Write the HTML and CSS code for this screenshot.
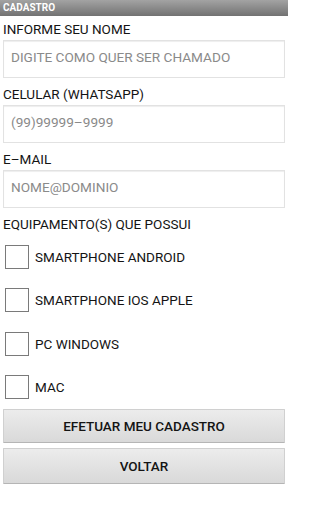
FILE: index.html
```html
<!DOCTYPE html>
<html lang="pt">
<head>
<meta charset="utf-8">
<title>Cadastro</title>
<link rel="stylesheet" href="styles.css">
</head>
<body>
<header class="titlebar">CADASTRO</header>
<main class="form">
  <label class="label first">INFORME SEU NOME</label>
  <div class="field"><span class="placeholder">DIGITE COMO QUER SER CHAMADO</span></div>
  <label class="label">CELULAR (WHATSAPP)</label>
  <div class="field"><span class="placeholder">(99)99999–9999</span></div>
  <label class="label">E–MAIL</label>
  <div class="field"><span class="placeholder">NOME@DOMINIO</span></div>
  <label class="label">EQUIPAMENTO(S) QUE POSSUI</label>
  <ul class="checks">
    <li class="check"><span class="box"></span><span class="check-text">SMARTPHONE ANDROID</span></li>
    <li class="check"><span class="box"></span><span class="check-text">SMARTPHONE IOS APPLE</span></li>
    <li class="check"><span class="box"></span><span class="check-text">PC WINDOWS</span></li>
    <li class="check"><span class="box"></span><span class="check-text">MAC</span></li>
  </ul>
  <button class="btn btn-primary">EFETUAR MEU CADASTRO</button>
  <button class="btn btn-back">VOLTAR</button>
</main>
</body>
</html>
```
FILE: styles.css
```css
html, body {
  margin: 0;
  padding: 0;
  background: #ffffff;
}
body {
  font-family: Roboto, "Liberation Sans", Arial, sans-serif;
  color: #141414;
  width: 288px;
  height: 512px;
  overflow: hidden;
}
.titlebar {
  height: 16px;
  line-height: 16px;
  padding-left: 3px;
  font-size: 10px;
  font-weight: bold;
  color: #ffffff;
  background: linear-gradient(#a3a3a3, #727272);
}
.form {
  display: flex;
  flex-direction: column;
  padding: 0 3px;
}
.label {
  display: block;
  font-size: 13.5px;
  line-height: 20px;
  margin-top: 6px;
  margin-bottom: 1px;
}
.label.first {
  margin-top: 3px;
}
.field {
  box-sizing: border-box;
  height: 38px;
  border: 1px solid #e2e2e2;
  box-shadow: inset 0 1px 1px rgba(0,0,0,0.07);
  display: flex;
  align-items: center;
  padding: 0 0 4px 7px;
}
.placeholder {
  font-size: 13.6px;
  color: #8a8a8a;
}
.checks {
  list-style: none;
  margin: 0;
  padding: 0;
}
.check {
  height: 43.5px;
  display: flex;
  align-items: center;
}
.box {
  box-sizing: border-box;
  width: 24px;
  height: 24px;
  margin-left: 2px;
  border: 1.5px solid #7a7a7a;
  background: #fff;
}
.check-text {
  margin-left: 6px;
  font-size: 13.5px;
}
.btn {
  box-sizing: border-box;
  width: 100%;
  margin: 0;
  padding: 0;
  font-family: Roboto, "Liberation Sans", Arial, sans-serif;
  font-size: 13.5px;
  font-weight: 500;
  color: #141414;
  background: linear-gradient(#ececec, #d9d9d9);
  border: 1px solid #d0d0d0;
  border-bottom: 1px solid #b5b5b5;
  border-radius: 1px;
}
.btn-primary {
  height: 34px;
  margin-top: 0;
}
.btn-back {
  height: 36px;
  margin-top: 5px;
}
```
